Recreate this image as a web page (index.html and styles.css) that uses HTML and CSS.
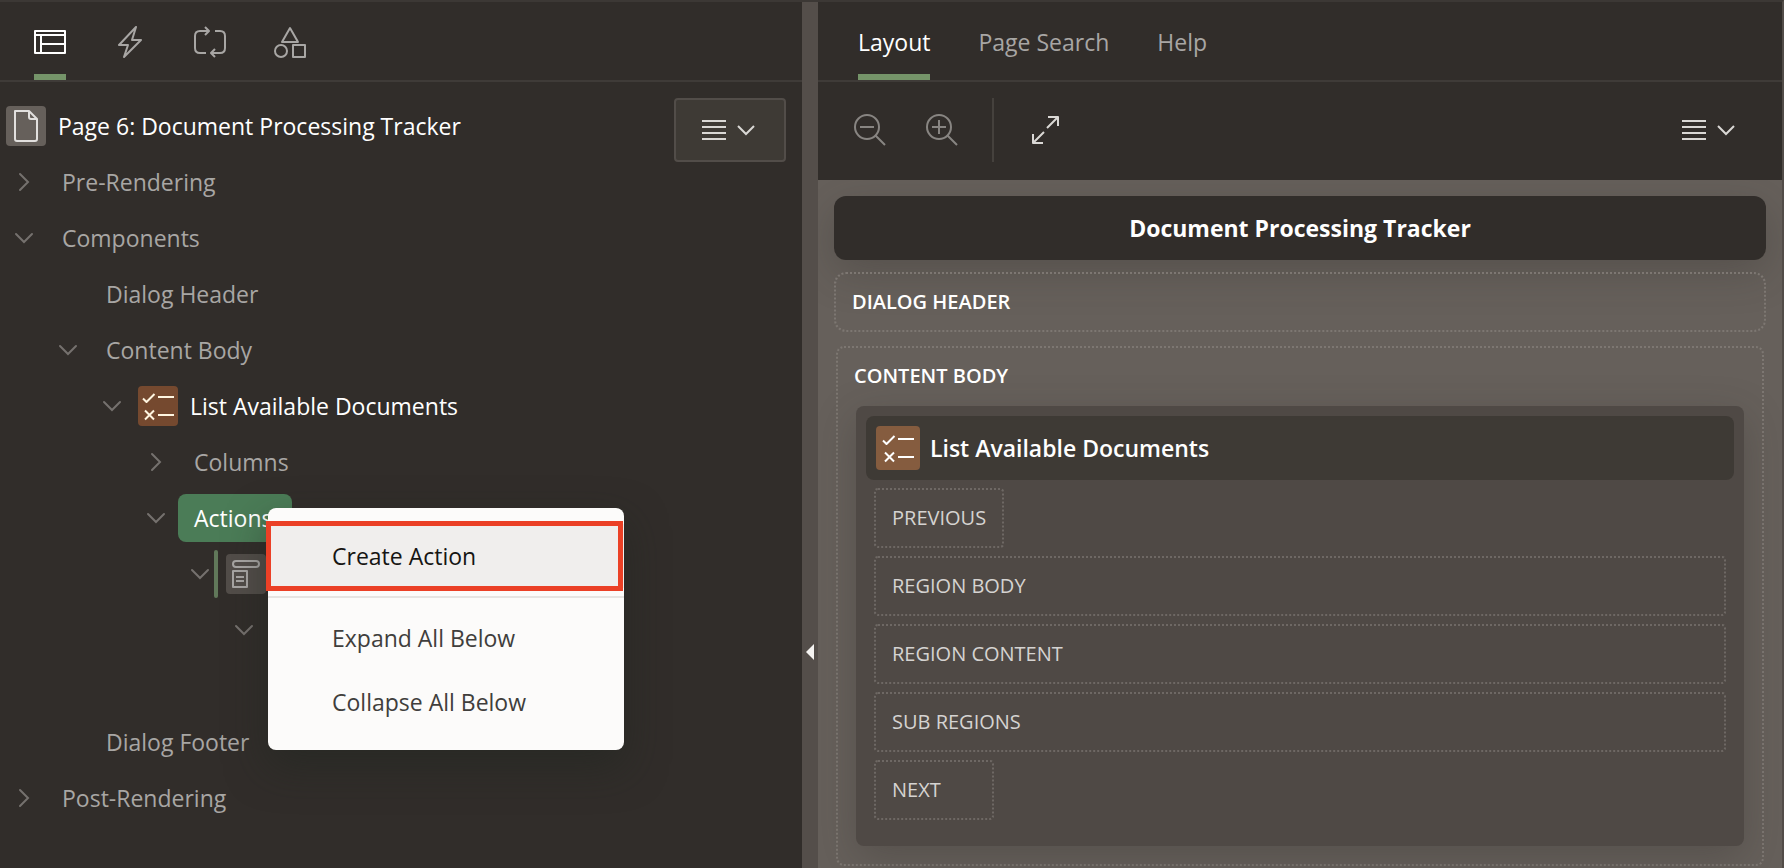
FILE: index.html
```html
<!DOCTYPE html>
<html lang="en">
<head>
<meta charset="utf-8">
<title>Page Designer</title>
<link rel="stylesheet" href="styles.css">
</head>
<body>
<svg class="defs" aria-hidden="true">
  <symbol id="down" viewBox="0 0 20 20"><path d="M2 6l8 8 8-8"/></symbol>
  <symbol id="right" viewBox="0 0 20 20"><path d="M6 2l8 8-8 8"/></symbol>
  <symbol id="list" viewBox="0 0 32 32"><path d="M1 8.500l3.500 3.500 8-8M16 7h16M3 20.500l9 9M12 20.500l-9 9M16 25h16"/></symbol>
  <symbol id="menu" viewBox="0 0 24 20"><path d="M0 1h24M0 7h24M0 13h24M0 19h24"/></symbol>
</svg>
<div class="app">
  <section class="panel tree-panel">
    <nav class="tabs icon-tabs" aria-label="Trees">
      <button class="tab active" aria-label="Rendering"><svg class="icon" viewBox="0 0 32 32"><path d="M1 5h30v22H1zM1 9h30M7 9v18M7 18h24"/></svg></button>
      <button class="tab" aria-label="Dynamic Actions"><svg class="icon" viewBox="0 0 32 32"><path d="M22 1L5 19h9L10 31 27 14h-9z"/></svg></button>
      <button class="tab" aria-label="Processing"><svg class="icon" viewBox="0 0 32 32"><path d="M12 27H6q-5 0-5-5V10q0-5 5-5h9M11 1l4 4-4 4M21 5h5q5 0 5 5v12q0 5-5 5h-9M21 23l-4 4 4 4"/></svg></button>
      <button class="tab" aria-label="Shared Components"><svg class="icon" viewBox="0 0 32 32"><path d="M16 2l8 14H8zM19 19h12v12H19z"/><circle cx="7" cy="25" r="6"/></svg></button>
    </nav>
    <div class="tree-body">
      <ul class="tree">
        <li class="row root"><span class="tile page"><svg class="icon" viewBox="0 0 32 32"><path d="M5 1h14l8 8v20q0 2-2 2H7q-2 0-2-2zM19 1v6q0 2 2 2h6"/></svg></span><span class="label strong">Page 6: Document Processing Tracker</span></li>
        <li class="row l1"><svg class="twist"><use href="#right"/></svg><span class="label">Pre-Rendering</span></li>
        <li class="row l1"><svg class="twist"><use href="#down"/></svg><span class="label">Components</span></li>
        <li class="row l2"><svg class="twist"></svg><span class="label">Dialog Header</span></li>
        <li class="row l2"><svg class="twist"><use href="#down"/></svg><span class="label">Content Body</span></li>
        <li class="row l3"><svg class="twist"><use href="#down"/></svg><span class="tile rust"><svg class="icon"><use href="#list"/></svg></span><span class="label strong">List Available Documents</span></li>
        <li class="row l4"><svg class="twist"><use href="#right"/></svg><span class="label">Columns</span></li>
        <li class="row l4"><svg class="twist"><use href="#down"/></svg><span class="label selected">Actions</span></li>
        <li class="row l5"><svg class="twist"><use href="#down"/></svg><span class="marker"></span><span class="tile region"><svg class="icon" viewBox="0 0 32 32"><rect x="3" y="3" width="26" height="6" rx="3"/><path d="M3 13h14v16H3zM6 19h8M6 23h8"/></svg></span></li>
        <li class="row l6"><svg class="twist"><use href="#down"/></svg></li>
        <li class="row l6"></li>
        <li class="row l2"><svg class="twist"></svg><span class="label">Dialog Footer</span></li>
        <li class="row l1"><svg class="twist"><use href="#right"/></svg><span class="label">Post-Rendering</span></li>
      </ul>
      <button class="menu-button framed" aria-label="Page menu"><svg class="bars"><use href="#menu"/></svg><svg class="caret"><use href="#down"/></svg></button>
    </div>
    <div class="context-menu" role="menu">
      <button class="item current" role="menuitem">Create Action</button>
      <hr class="rule">
      <button class="item" role="menuitem">Expand All Below</button>
      <button class="item" role="menuitem">Collapse All Below</button>
    </div>
  </section>
  <div class="splitter"><svg class="grip" viewBox="0 0 8 16"><path d="M8 0v16L0 8z"/></svg></div>
  <section class="panel layout-panel">
    <nav class="tabs text-tabs" aria-label="Editor">
      <button class="tab active">Layout</button>
      <button class="tab">Page Search</button>
      <button class="tab">Help</button>
    </nav>
    <div class="toolbar">
      <button class="tool dim" aria-label="Zoom out"><svg class="icon" viewBox="0 0 32 32"><circle cx="13" cy="13" r="12"/><path d="M21.500 21.500L31 31M6 13h14"/></svg></button>
      <button class="tool dim" aria-label="Zoom in"><svg class="icon" viewBox="0 0 32 32"><circle cx="13" cy="13" r="12"/><path d="M21.500 21.500L31 31M6 13h14M13 6v14"/></svg></button>
      <span class="divider"></span>
      <button class="tool" aria-label="Expand"><svg class="icon" viewBox="0 0 32 32"><path d="M17 14L27 4M18 3h10v9M14 18L4 28M3 20v9h10"/></svg></button>
      <button class="menu-button end" aria-label="Layout menu"><svg class="bars"><use href="#menu"/></svg><svg class="caret"><use href="#down"/></svg></button>
    </div>
    <main class="canvas">
      <h1 class="page-title">Document Processing Tracker</h1>
      <section class="zone"><h2 class="zone-title">DIALOG HEADER</h2></section>
      <section class="zone body-zone">
        <h2 class="zone-title">CONTENT BODY</h2>
        <article class="card">
          <h3 class="card-title"><span class="tile copper"><svg class="icon"><use href="#list"/></svg></span>List Available Documents</h3>
          <ul class="slots">
            <li class="slot fit">PREVIOUS</li>
            <li class="slot">REGION BODY</li>
            <li class="slot">REGION CONTENT</li>
            <li class="slot">SUB REGIONS</li>
            <li class="slot fit">NEXT</li>
          </ul>
        </article>
      </section>
    </main>
  </section>
</div>
</body>
</html>
```
FILE: styles.css
```css
* { box-sizing: border-box; }

body {
  margin: 0;
  background: #312d2a;
  color: #a8a6a4;
  font-family: "Open Sans", "Noto Sans", sans-serif;
  font-size: 23px;
  line-height: 32px;
}

h1, h2, h3, ul { margin: 0; padding: 0; list-style: none; font-size: inherit; }

button {
  margin: 0;
  padding: 0;
  border: 0;
  background: none;
  color: inherit;
  font: inherit;
}

svg { display: block; flex: none; fill: none; stroke: currentColor; stroke-width: 2; }
.defs { position: absolute; width: 0; height: 0; }
.icon { width: 32px; height: 32px; stroke-linejoin: round; }

.app {
  display: flex;
  height: 100vh;
  overflow: hidden;
  border-top: 2px solid #3c3835;
  border-right: 2px solid #524c48;
}

.panel { position: relative; display: flex; flex-direction: column; min-width: 0; }
.tree-panel { flex: 802 1 0; }
.layout-panel { flex: 964 1 0; }

.tabs {
  display: flex;
  flex: none;
  gap: 48px;
  height: 80px;
  border-bottom: 2px solid #3f3b38;
}
.icon-tabs { padding-left: 34px; }
.text-tabs { padding-left: 40px; }
.tab { height: 78px; padding-top: 8px; border-bottom: 6px solid transparent; }
.tab.active { color: #fff; border-color: #759469; }
.text-tabs .active { font-weight: 500; }

.tree-body { display: flex; align-items: flex-start; padding: 16px 16px 0 0; }
.tree { flex: 1; min-width: 0; }
.row { display: flex; align-items: center; height: 56px; white-space: nowrap; }
.root { padding-left: 6px; gap: 12px; }
.l1 { padding-left: 14px; }
.l2 { padding-left: 58px; }
.l3 { padding-left: 102px; }
.l4 { padding-left: 146px; }
.l5 { padding-left: 190px; }
.l6 { padding-left: 234px; }
.twist { width: 20px; height: 20px; margin-right: 12px; color: #75716e; stroke-linecap: round; }
.twist + .label { padding: 0 16px; }
.label { border-radius: 8px; }
.strong { color: #fff; font-weight: 500; }
.l3 .strong { margin-left: 12px; }
.l3 .twist { margin-right: 16px; }
.twist + .selected { padding-right: 20px; background: #4b7c57; color: #fff; font-weight: 500; line-height: 48px; }

.tile {
  display: flex;
  align-items: center;
  justify-content: center;
  flex: none;
  width: 40px;
  height: 40px;
  border-radius: 4px;
}
.page { background: #66605b; color: #e2e0de; }
.rust { background: #75492f; color: #fff5e0; }
.copper { width: 44px; height: 44px; background: #855c3f; color: #fff; }
.region { background: #524d49; color: #a8a6a4; }
.marker { width: 4px; height: 48px; margin-right: 8px; border-radius: 2px; background: #61785a; }
.l5 .twist { margin-right: 4px; }

.menu-button {
  display: flex;
  align-items: center;
  flex: none;
  gap: 10px;
  height: 64px;
  padding: 0 28px;
  color: #dad8d5;
}
.framed { width: 112px; padding: 0 26px; border: 2px solid #524d49; border-radius: 4px; background: #3e3a35; }
.bars { width: 24px; height: 20px; }
.caret { width: 20px; height: 20px; }

.context-menu {
  position: absolute;
  left: 268px;
  top: 506px;
  width: 356px;
  padding: 16px 0;
  border-radius: 8px;
  background: #fcfbfa;
  color: #403e3c;
  box-shadow: 0 16px 40px rgba(32, 38, 32, .5);
}
.item { display: block; width: 100%; height: 64px; padding-left: 64px; text-align: left; }
.current { position: relative; background: #f0eeed; color: #161513; }
.current::after {
  content: "";
  position: absolute;
  inset: -3px 1px -3px -2px;
  border: 5px solid #eb4026;
}
.rule { height: 2px; margin: 8px 0; border: 0; background: #e6e4e2; }

.splitter {
  display: flex;
  align-items: center;
  flex: none;
  width: 16px;
  padding: 434px 0 0 4px;
  background: #544e4a;
}
.grip { width: 8px; height: 16px; fill: #f5f3f1; stroke: none; }

.toolbar { display: flex; flex: none; align-items: center; height: 98px; padding: 0 18px 2px 16px; color: #dad8d5; }
.tool { display: flex; align-items: center; justify-content: center; width: 72px; height: 64px; }
.dim { color: #888582; }
.divider { width: 2px; height: 64px; margin: 0 16px 0 14px; background: #45413d; }
.end { margin-left: auto; }

.canvas { flex: 1; min-height: 0; padding: 16px; background: #66605b; overflow: hidden; }
.page-title {
  border-radius: 12px;
  background: #312d2a;
  color: #fff;
  font-weight: 700;
  line-height: 64px;
  text-align: center;
  box-shadow: 0 12px 40px rgba(49, 45, 42, .3);
}
.zone { position: relative; margin-top: 12px; padding: 12px 16px; border: 2px dotted #7d7772; border-radius: 12px; }
.zone-title { color: #fff; font-size: 20px; font-weight: 600; }
.body-zone { margin: 14px 2px 0; padding-bottom: 18px; border-radius: 8px; }
.card {
  margin: 14px 2px 0;
  padding: 10px 10px 18px;
  border-radius: 8px;
  background: #4f4945;
  box-shadow: 0 12px 40px rgba(49, 45, 42, .3);
}
.card-title {
  display: flex;
  align-items: center;
  gap: 10px;
  height: 64px;
  padding: 0 10px;
  border-radius: 8px;
  background: #3e3a35;
  color: #fff;
  font-weight: 600;
}
.slots { display: flex; flex-direction: column; gap: 8px; padding: 8px; }
.slot { min-width: 120px; padding: 13px 16px 13px; border: 2px dotted #6e6864; border-radius: 4px; color: #d5d3d1; font-size: 20px; line-height: 30px; }
.fit { align-self: flex-start; }
```
